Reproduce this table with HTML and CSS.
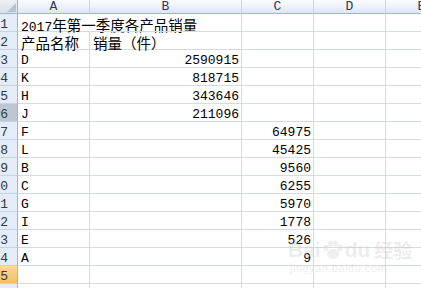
FILE: index.html
```html
<!DOCTYPE html>
<html lang="zh">
<head>
<meta charset="utf-8">
<title>2017年第一季度各产品销量</title>
<link rel="stylesheet" href="styles.css">
</head>
<body>
<div class="sheet">
  <div class="corner"><svg width="18" height="14" viewBox="0 0 18 14"><polygon points="16,3 16,12 7,12" fill="#b9c3cf"/></svg></div>
  <div class="ch">A</div><div class="ch">B</div><div class="ch">C</div><div class="ch">D</div><div class="ch">E</div>

  <div class="rh"><span>1</span></div><div class="c spill"><span class="cjk-mix">2017<span class="cjk">年第一季度各产品销量</span></span></div><div class="c"></div><div class="c"></div><div class="c"></div><div class="c"></div>
  <div class="rh"><span>2</span></div><div class="c"><span class="cjk">产品名称</span></div><div class="c"><span class="cjk">销量（件）</span></div><div class="c"></div><div class="c"></div><div class="c"></div>
  <div class="rh"><span>3</span></div><div class="c">D</div><div class="c n">2590915</div><div class="c"></div><div class="c"></div><div class="c"></div>
  <div class="rh"><span>4</span></div><div class="c">K</div><div class="c n">818715</div><div class="c"></div><div class="c"></div><div class="c"></div>
  <div class="rh"><span>5</span></div><div class="c">H</div><div class="c n">343646</div><div class="c"></div><div class="c"></div><div class="c"></div>
  <div class="rh hover"><span>6</span></div><div class="c">J</div><div class="c n">211096</div><div class="c"></div><div class="c"></div><div class="c"></div>
  <div class="rh"><span>7</span></div><div class="c">F</div><div class="c"></div><div class="c n">64975</div><div class="c"></div><div class="c"></div>
  <div class="rh"><span>8</span></div><div class="c">L</div><div class="c"></div><div class="c n">45425</div><div class="c"></div><div class="c"></div>
  <div class="rh"><span>9</span></div><div class="c">B</div><div class="c"></div><div class="c n">9560</div><div class="c"></div><div class="c"></div>
  <div class="rh"><span>10</span></div><div class="c">C</div><div class="c"></div><div class="c n">6255</div><div class="c"></div><div class="c"></div>
  <div class="rh"><span>11</span></div><div class="c">G</div><div class="c"></div><div class="c n">5970</div><div class="c"></div><div class="c"></div>
  <div class="rh"><span>12</span></div><div class="c">I</div><div class="c"></div><div class="c n">1778</div><div class="c"></div><div class="c"></div>
  <div class="rh"><span>13</span></div><div class="c">E</div><div class="c"></div><div class="c n">526</div><div class="c"></div><div class="c"></div>
  <div class="rh"><span>14</span></div><div class="c">A</div><div class="c"></div><div class="c n">9</div><div class="c"></div><div class="c"></div>
  <div class="rh active"><span>15</span></div><div class="c"></div><div class="c"></div><div class="c"></div><div class="c"></div><div class="c"></div>
  <div class="rh"><span>16</span></div><div class="c"></div><div class="c"></div><div class="c"></div><div class="c"></div><div class="c"></div>

  <div class="watermark">
    <div class="wm-line"><span class="wm-bai">Bai</span><svg class="paw" width="22" height="20" viewBox="0 0 22 20"><ellipse cx="11" cy="14" rx="6" ry="5" fill="#d6d6d6"/><ellipse cx="4" cy="8" rx="2.6" ry="3.2" fill="#d6d6d6"/><ellipse cx="8.5" cy="3.5" rx="2.4" ry="3" fill="#d6d6d6"/><ellipse cx="13.5" cy="3.5" rx="2.4" ry="3" fill="#d6d6d6"/><ellipse cx="18" cy="8" rx="2.6" ry="3.2" fill="#d6d6d6"/></svg><span class="wm-du">du</span><span class="wm-jy">经验</span></div>
    <div class="wm-url">jingyan.baidu.com</div>
  </div>
</div>
</body>
</html>
```
FILE: styles.css
```css
html, body {
  margin: 0;
  padding: 0;
  background: #ffffff;
  overflow: hidden;
}

.sheet {
  position: relative;
  display: grid;
  grid-template-columns: 18px 72px 152px 72px 72px 72px;
  grid-template-rows: 14px repeat(16, 18px);
  width: 458px;
  font-family: "Liberation Mono", "DejaVu Sans Mono", monospace;
  font-size: 13px;
  color: #000;
}

.corner {
  background: linear-gradient(#eef1f5, #d9dfe7);
  border-right: 1px solid #9eb6ce;
  border-bottom: 1px solid #9eb6ce;
  box-sizing: border-box;
  overflow: hidden;
}
.corner svg { display: block; }

.ch {
  box-sizing: border-box;
  background: linear-gradient(#fafcfe 0%, #edf1f7 55%, #dde5ee 100%);
  border-right: 1px solid #c5d3e2;
  border-bottom: 1px solid #9eb6ce;
  text-align: center;
  font-size: 13px;
  line-height: 14px;
  color: #2b3b4e;
}

.rh {
  box-sizing: border-box;
  background: #e4ecf7;
  border-right: 1px solid #9eb6ce;
  border-bottom: 1px solid #c5d3e2;
  display: flex;
  justify-content: flex-end;
  padding-right: 9px;
  overflow: hidden;
  line-height: 17px;
  padding-top: 2px;
  color: #333a44;
  font-size: 13px;
}
.rh span { white-space: nowrap; }
.rh.hover { background: #bcc7d3; }
.rh.active { background: linear-gradient(#f9d99f, #f1c15f); }

.c {
  box-sizing: border-box;
  border-right: 1px solid #d6dbe2;
  border-bottom: 1px solid #d6dbe2;
  padding: 2px 2px 0 3px;
  line-height: 17px;
  white-space: nowrap;
  overflow: visible;
}
.c.n { text-align: right; padding-right: 2px; }
.c.spill { border-right: none; }

.cjk {
  font-family: "Noto Sans CJK SC", sans-serif;
  font-size: 14.5px;
}

.watermark {
  position: absolute;
  left: 288px;
  top: 238px;
  color: rgba(200, 200, 200, 0.35);
  font-family: "Liberation Sans", sans-serif;
  pointer-events: none;
}
.wm-line {
  display: flex;
  align-items: center;
  font-size: 21px;
  font-weight: bold;
  line-height: 24px;
}
.paw { margin: 0 1px; opacity: 0.4; }
.wm-jy {
  font-family: "Noto Sans CJK SC", sans-serif;
  font-size: 19px;
  margin-left: 4px;
}
.wm-url {
  font-size: 11px;
  line-height: 12px;
  letter-spacing: 0.5px;
  margin-left: 2px;
}
```
